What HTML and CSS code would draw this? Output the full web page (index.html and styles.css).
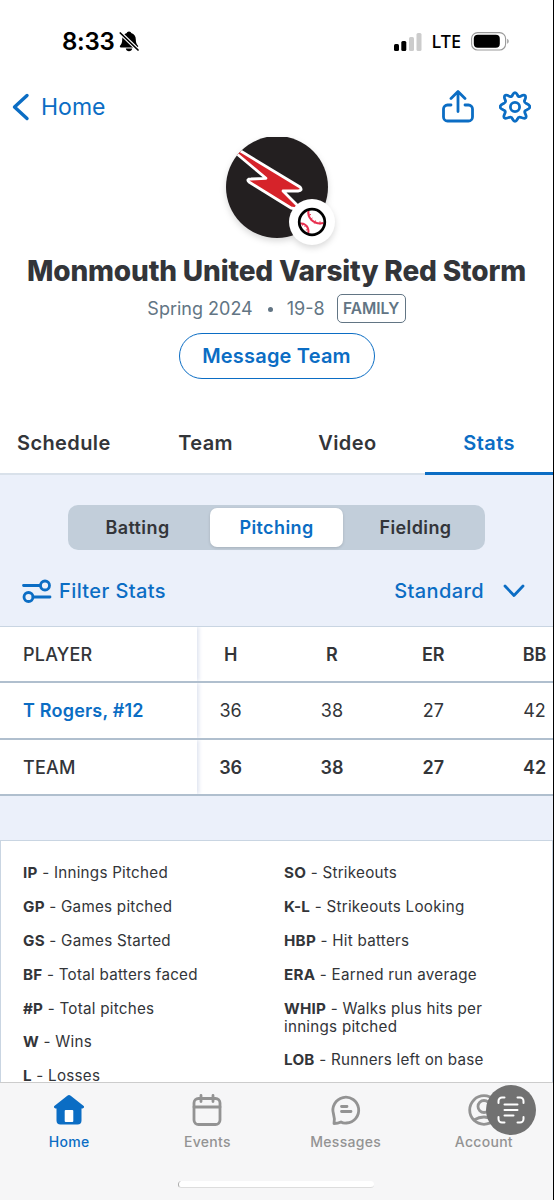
FILE: index.html
```html
<!DOCTYPE html>
<html lang="en">

<head>
    <meta charset="UTF-8">
    <meta name="viewport" content="width=device-width, initial-scale=1.0">
    <title>Team Stats</title>
    <link rel="stylesheet" href="styles.css">
</head>

<body>
    <div class="app">
        <div class="status">
            <div class="status-left">
                <span class="time">8:33</span>
                <svg width="20" height="21" viewBox="0 0 20 21">
                    <path d="M10 .5c1.300 0 2.100.8 2.200 1.500 3.200.9 4.600 3.300 4.600 6.500 0 3.200.9 5 2 6 .7.700.4 1.900-.7 1.900H1.900c-1.100 0-1.400-1.200-.7-1.900 1.100-1 2-2.800 2-6 0-3.200 1.400-5.600 4.600-6.500C7.900 1.300 8.700.5 10 .5z" fill="#000" />
                    <path d="M6.800 17.600h6.400c-.3 1.700-1.500 2.700-3.200 2.700s-2.900-1-3.200-2.700z" fill="#000" />
                    <path d="M1.500 2.200l17.500 16.800" stroke="#fff" stroke-width="3.800" />
                    <path d="M1.300 2l17.700 17" stroke="#000" stroke-width="1.700" stroke-linecap="round" />
                </svg>
            </div>
            <div class="status-right">
                <svg width="28" height="18" viewBox="0 0 28 18">
                    <rect x="0" y="11" width="5" height="7" rx="1.500" />
                    <rect x="7.300" y="8" width="5" height="10" rx="1.500" />
                    <rect x="15" y="4" width="5" height="14" rx="1.500" fill="#ccc" />
                    <rect x="22.500" y="0" width="5" height="18" rx="1.500" fill="#ccc" />
                </svg>
                <span class="lte">LTE</span>
                <svg width="38" height="19" viewBox="0 0 38 19">
                    <rect x=".6" y=".6" width="34" height="17.400" rx="6" fill="none" stroke="#999" stroke-width="1.100" />
                    <rect x="2.800" y="2.800" width="26" height="13" rx="4" />
                    <path d="M36.300 6.800c1.700.8 1.700 4.200 0 5z" fill="#888" />
                </svg>
            </div>
        </div>

        <div class="topbar">
            <a class="back">
                <svg width="18" height="28" viewBox="0 0 18 28">
                    <path d="M15 2.500L2.500 14 15 25.500" fill="none" stroke="currentColor" stroke-width="3.400" stroke-linecap="round" stroke-linejoin="round" />
                </svg>
                <span>Home</span>
            </a>
            <div class="actions">
                <svg class="stroke" width="34" height="34" viewBox="0 0 34 34">
                    <path d="M10 15H6.500a4 4 0 0 0-4 4v8a4 4 0 0 0 4 4h21a4 4 0 0 0 4-4v-8a4 4 0 0 0-4-4H24M17 21.500V2M10 8.500l7-7 7 7" />
                </svg>
                <svg class="stroke" width="32" height="32" viewBox="0 0 32 32">
                    <path d="M13.500 4Q16 -0.600 18.500 4Q19.200 6.300 21.200 5.400Q27.600 2.300 26.400 7.500L25.500 9.600Q25 11.600 27.500 12.600Q34.400 16 27.500 19Q25 20 26 22L27 24.600Q28 29 21.500 26.300Q19.200 25.700 18.500 28Q16 32.600 13.500 28Q12.800 25.700 10.500 26.300Q4 29 5 24.600L6 22Q7 20 4.500 19Q-2.400 16 4.500 12.600Q7 11.600 6.500 9.600L5.600 7.500Q4.400 2.300 10.800 5.400Q12.800 6.300 13.500 4Z" />
                    <circle cx="16" cy="16" r="4.600" />
                </svg>
            </div>
        </div>

        <div class="team">
            <div class="avatar">
                <svg class="logo" width="102" height="102" viewBox="0 0 102 102">
                    <clipPath id="logo-clip">
                        <circle cx="51" cy="50" r="51" />
                    </clipPath>
                    <g clip-path="url(#logo-clip)">
                        <rect width="102" height="102" fill="#231f20" />
                        <path d="M8 11L13 13L74 50Q77 53.500 72 54L57 54L76 73L65 71L23 45Q20 42 25 42L40 41.300L11 17Z" fill="#d6232a" stroke="#fff" stroke-width="2.800" stroke-linejoin="round" />
                    </g>
                </svg>
                <div class="sport">
                    <svg width="30" height="30" viewBox="0 0 30 30">
                        <g fill="none" stroke="#e8304f" stroke-width="2">
                            <path d="M11.700 2.500c-2 8 4.500 15.500 14.800 13.600" />
                            <path d="M3 16.500c5.500-.8 9.300 4 8.300 10" />
                            <path d="M14 7.500l-3 .8M15.500 11l-2.500 2M18.500 13.500l-1.200 3M23 14.300v3.200M6 15.700l-.4 3M9.500 18l-2 2M11.800 22.500l-3 .5" stroke-width="1" />
                        </g>
                        <circle cx="15" cy="15" r="12.800" fill="none" stroke="#000" stroke-width="2.700" />
                    </svg>
                </div>
            </div>
            <h1>Monmouth United Varsity Red Storm</h1>
            <div class="meta">
                <span>Spring 2024</span>
                <span class="dot"></span>
                <span>19-8</span>
                <span class="badge">FAMILY</span>
            </div>
            <button class="message">Message Team</button>
        </div>

        <div class="tabs">
            <a class="tab">Schedule</a>
            <a class="tab">Team</a>
            <a class="tab">Video</a>
            <a class="tab active">Stats</a>
        </div>

        <div class="content">
            <div class="segments">
                <div class="segment">Batting</div>
                <div class="segment active">Pitching</div>
                <div class="segment">Fielding</div>
            </div>
            <div class="filters">
                <div class="filter">
                    <svg class="stroke" width="30" height="24" viewBox="0 0 30 24">
                        <path d="M1.500 6.500H18M11 18h17" />
                        <circle cx="23" cy="6.500" r="4.500" />
                        <circle cx="6.500" cy="18" r="4.500" />
                    </svg>
                    <span>Filter Stats</span>
                </div>
                <div class="filter view">
                    <span>Standard</span>
                    <svg class="stroke" width="22" height="14" viewBox="0 0 22 14">
                        <path d="M2 2l9 9.500L20 2" />
                    </svg>
                </div>
            </div>

            <div class="table">
                <div class="row head">
                    <div class="player">PLAYER</div>
                    <div class="cell">H</div>
                    <div class="cell">R</div>
                    <div class="cell">ER</div>
                    <div class="cell">BB</div>
                </div>
                <div class="row">
                    <div class="player link">T Rogers, #12</div>
                    <div class="cell">36</div>
                    <div class="cell">38</div>
                    <div class="cell">27</div>
                    <div class="cell">42</div>
                </div>
                <div class="row total">
                    <div class="player">TEAM</div>
                    <div class="cell">36</div>
                    <div class="cell">38</div>
                    <div class="cell">27</div>
                    <div class="cell">42</div>
                </div>
            </div>

            <div class="legend">
                <div class="legend-col">
                    <p><b>IP</b> - Innings Pitched</p>
                    <p><b>GP</b> - Games pitched</p>
                    <p><b>GS</b> - Games Started</p>
                    <p><b>BF</b> - Total batters faced</p>
                    <p><b>#P</b> - Total pitches</p>
                    <p><b>W</b> - Wins</p>
                    <p><b>L</b> - Losses</p>
                </div>
                <div class="legend-col">
                    <p><b>SO</b> - Strikeouts</p>
                    <p><b>K-L</b> - Strikeouts Looking</p>
                    <p><b>HBP</b> - Hit batters</p>
                    <p><b>ERA</b> - Earned run average</p>
                    <p><b>WHIP</b> - Walks plus hits per<br>innings pitched</p>
                    <p><b>LOB</b> - Runners left on base</p>
                </div>
            </div>
        </div>

        <div class="bottom">
            <div class="nav">
                <a class="nav-item active">
                    <svg width="32" height="32" viewBox="0 0 32 32">
                        <path d="M14.300 1.700Q16 .3 17.700 1.700L31 12.200Q31.500 14.200 29.500 14.500H28.500V26.500a4 4 0 0 1-4 4h-17a4 4 0 0 1-4-4V14.500H2.500Q.5 14.200 1 12.200Z" fill="currentColor" />
                        <rect x="11.700" y="16" width="8.600" height="12" rx="1" fill="#fff" />
                    </svg>
                    <span>Home</span>
                </a>
                <a class="nav-item">
                    <svg class="stroke" width="32" height="32" viewBox="0 0 32 32">
                        <rect x="3" y="4.500" width="26" height="26" rx="4.500" />
                        <path d="M3 13h26M10 1.500v6M22 1.500v6" />
                    </svg>
                    <span>Events</span>
                </a>
                <a class="nav-item">
                    <svg class="stroke" width="32" height="32" viewBox="0 0 32 32">
                        <path d="M4 29.500Q5 25 3.500 20A12.900 12.900 0 1 1 16.500 29Q13.500 29.500 11 28Q8 29.500 4 29.500Z" />
                        <path d="M11.500 12.500h5.500M11.500 17.500h9.500" />
                    </svg>
                    <span>Messages</span>
                </a>
                <a class="nav-item">
                    <svg class="stroke" width="32" height="32" viewBox="0 0 32 32">
                        <circle cx="16" cy="16" r="14.300" />
                        <circle cx="16" cy="12.500" r="6" />
                        <path d="M6 26Q16 20 26 26" />
                    </svg>
                    <span>Account</span>
                </a>
            </div>
            <div class="home-bar"></div>
            <div class="scan">
                <svg width="28" height="28" viewBox="0 0 28 28" fill="none" stroke="#fff" stroke-width="2" stroke-linecap="round">
                    <path d="M1.500 7V5a3.500 3.500 0 0 1 3.500-3.500h2.500M20.500 1.500H23A3.500 3.500 0 0 1 26.500 5v2M26.500 21v2a3.500 3.500 0 0 1-3.500 3.500h-2.500M7.500 26.500H5A3.500 3.500 0 0 1 1.500 23v-2M7.500 8.500h13M7.500 14h13M7.500 19.500h9" />
                </svg>
            </div>
        </div>
    </div>
</body>

</html>
```
FILE: styles.css
```css
* {
    margin: 0;
    padding: 0;
    box-sizing: border-box;
}

body {
    font-family: Inter, "Liberation Sans", sans-serif;
    color: #333539;
    background: #fff;
}

svg {
    display: block;
    flex: none;
}

.stroke {
    fill: none;
    stroke: currentColor;
    stroke-width: 2.8;
    stroke-linecap: round;
    stroke-linejoin: round;
}

.app {
    width: 554px;
    height: 1200px;
    display: flex;
    flex-direction: column;
    overflow: hidden;
    border-right: 1px solid #000;
}

/* status bar */
.status {
    height: 83px;
    padding: 0 44px 0 62px;
    display: flex;
    align-items: center;
    justify-content: space-between;
    color: #000;
}

.status-left,
.status-right {
    display: flex;
    align-items: center;
}

.status-left {
    gap: 5px;
}

.time {
    font-size: 24px;
    font-weight: 600;
    letter-spacing: -0.3px;
}

.lte {
    margin: 0 10px;
    font-family: "Noto Sans", sans-serif;
    font-size: 18px;
    font-weight: 500;
    line-height: 24px;
    padding-bottom: 1px;
}

/* top bar */
.topbar {
    height: 48px;
    padding: 0 22px 0 12px;
    display: flex;
    align-items: center;
    justify-content: space-between;
    color: #0b6dc4;
}

.back {
    display: flex;
    align-items: center;
    gap: 11px;
    font-size: 23px;
}

.actions {
    display: flex;
    align-items: center;
    gap: 24px;
}

/* team header */
.team {
    height: 282px;
    padding-top: 6px;
    display: flex;
    flex-direction: column;
    align-items: center;
}

.avatar {
    position: relative;
    height: 102px;
    filter: drop-shadow(0 3px 3px rgba(0, 0, 0, 0.15));
}

.sport {
    position: absolute;
    left: 63px;
    top: 62px;
    width: 46px;
    height: 46px;
    border-radius: 50%;
    background: #fff;
    display: flex;
    align-items: center;
    justify-content: center;
}

h1 {
    margin-top: 15px;
    font-size: 28px;
    font-weight: 800;
    line-height: 34px;
    letter-spacing: -0.17px;
    white-space: nowrap;
}

.meta {
    height: 30px;
    margin-top: 5px;
    display: flex;
    align-items: center;
    font-size: 18px;
    color: #627584;
}

.dot {
    width: 5px;
    height: 5px;
    margin: 3px 14px 0 15px;
    border-radius: 50%;
    background: #627584;
}

.badge {
    width: 69px;
    height: 29px;
    margin-left: 12px;
    border: 1.5px solid #627584;
    border-radius: 5px;
    font-size: 15.5px;
    font-weight: 600;
    line-height: 27px;
    text-align: center;
}

.message {
    width: 196px;
    height: 46px;
    margin-top: 10px;
    border: 1.5px solid #0b6dc4;
    border-radius: 23px;
    background: #fff;
    color: #0b6dc4;
    font: 600 20px Inter, sans-serif;
    letter-spacing: 0.2px;
}

/* tabs */
.tabs {
    height: 62px;
    display: flex;
    gap: 14px;
    border-bottom: 2px solid #d9e1ea;
}

.tab {
    flex: 1;
    height: 62px;
    line-height: 61px;
    text-align: center;
    font-size: 20px;
    font-weight: 600;
    letter-spacing: 0.4px;
}

.tab.active {
    color: #0b6dc4;
    border-bottom: 3px solid #0b6dc4;
}

/* stats */
.content {
    height: 607px;
    background: #ebf0fa;
    overflow: hidden;
}

.segments {
    width: 417px;
    height: 45px;
    margin: 30px auto 0;
    padding: 3px 0;
    display: flex;
    border-radius: 10px;
    background: #c2ceda;
}

.segment {
    flex: 1;
    margin: 0 3px;
    border-radius: 7px;
    line-height: 40px;
    text-align: center;
    font-size: 18px;
    font-weight: 600;
    letter-spacing: 0.4px;
}

.segment.active {
    background: #fff;
    color: #0b6dc4;
    box-shadow: 0 1px 3px rgba(0, 0, 0, 0.15);
}

.filters {
    height: 76px;
    padding: 6px 28px 0 22px;
    display: flex;
    align-items: center;
    justify-content: space-between;
}

.filter {
    display: flex;
    align-items: center;
    gap: 7px;
    font-size: 20px;
    font-weight: 500;
    letter-spacing: 0.4px;
    color: #0b6dc4;
}

.view {
    gap: 19px;
}

.table {
    border-top: 1px solid #c9d5e2;
    background: #fff;
    overflow: hidden;
}

.row {
    height: 57px;
    display: flex;
    line-height: 56px;
    border-bottom: 2px solid #b0bfce;
    font-size: 18px;
}

.head,
.total {
    height: 56px;
}

.player {
    position: relative;
    z-index: 1;
    flex: none;
    width: 197px;
    padding-left: 23px;
    font-weight: 500;
    letter-spacing: 0.2px;
    background: #fff;
    box-shadow: 2px 0 4px #dfe4f0;
    clip-path: inset(0 -6px 0 0);
}

.link {
    color: #0b6dc4;
    font-weight: 600;
}

.cell {
    flex: none;
    width: 101.3px;
    text-align: center;
}

/* first column slides under the player column */
.player + .cell {
    margin-left: -17px;
}

.head .cell,
.total .cell {
    font-weight: 600;
}

.legend {
    height: 260px;
    margin-top: 44px;
    padding: 23px 22px;
    display: flex;
    border: 1px solid #c9d5e2;
    background: #fff;
    font-size: 15.2px;
    line-height: 18px;
    letter-spacing: 0.25px;
}

.legend-col {
    width: 261px;
    flex: none;
}

.legend p {
    margin-bottom: 15.9px;
}

.legend b {
    font-weight: 700;
}

/* bottom navigation */
.bottom {
    position: relative;
    height: 118px;
    border-top: 1px solid #ccc;
    background: #f6f6f7;
}

.nav {
    height: 76px;
    padding-top: 11px;
    display: flex;
}

.nav-item {
    flex: 1;
    display: flex;
    flex-direction: column;
    align-items: center;
    gap: 7px;
    font-size: 14px;
    font-weight: 500;
    letter-spacing: 0.3px;
    color: #939393;
}

.nav-item.active {
    color: #0b6dc4;
}

.home-bar {
    width: 196px;
    height: 7px;
    margin: 22px auto 0 178px;
    border-left: 1px solid #aaa;
    border-bottom: 1px solid #ddd;
    border-radius: 4px;
    background: #fff;
}

.scan {
    position: absolute;
    right: 17px;
    top: 2px;
    width: 50px;
    height: 50px;
    border-radius: 50%;
    background: #717171;
    display: flex;
    align-items: center;
    justify-content: center;
}
```
